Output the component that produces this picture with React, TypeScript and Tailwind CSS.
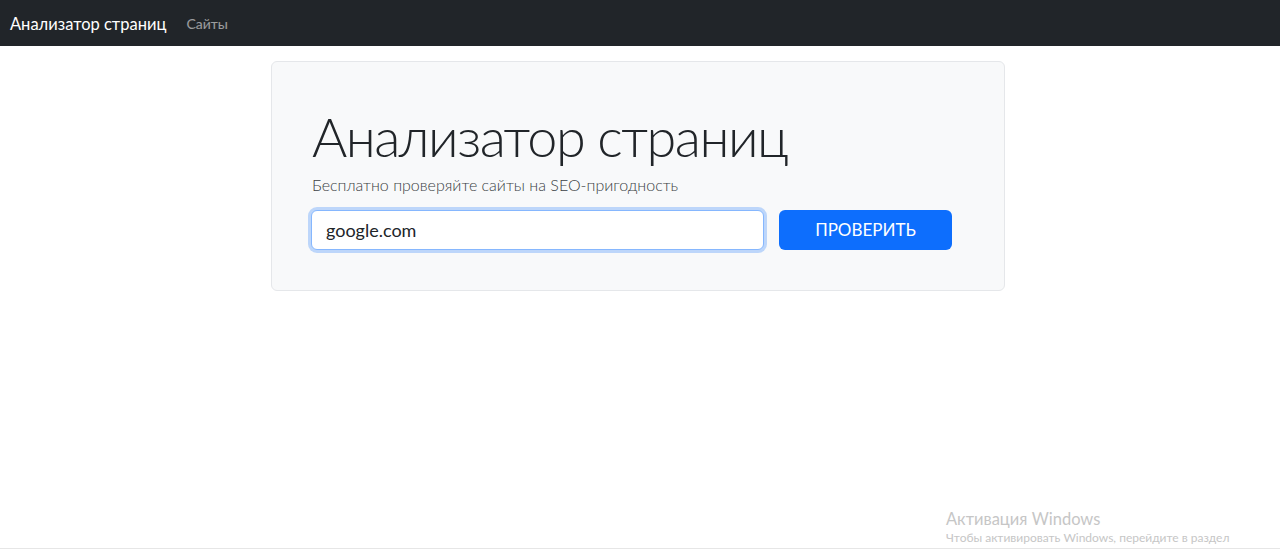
import { useState } from 'react'

export default function App() {
  const [url, setUrl] = useState('google.com')

  return (
    <div className="relative flex min-h-[551px] flex-col bg-white font-['Lato','Noto_Sans',sans-serif] text-[#212529]">
      <nav className="flex h-[46px] items-center bg-[#212529] px-[10px] pt-[2px]">
        <a href="#" className="text-[16.5px] leading-none text-white">Анализатор страниц</a>
        <a href="#" className="ml-[20px] text-[14px] leading-none text-white/55">Сайты</a>
      </nav>

      <main className="mt-[15px] flex justify-center pr-[4px]">
        <div className="w-[734px] rounded-[6px] border border-[#e5e7ea] bg-[#f8f9fa] pt-[43px] pr-[40px] pb-[40px] pl-[39px]">
          <h1 className="pl-[1px] text-[54px] leading-[1.2] font-light tracking-[-1.5px]">Анализатор страниц</h1>
          <p className="mt-[5px] pl-[1px] text-[16px] leading-[1.3] font-light text-[#3a3f44]">
            Бесплатно проверяйте сайты на SEO-пригодность
          </p>
          <form className="mt-[14px] flex gap-[15px]" onSubmit={(e) => e.preventDefault()}>
            <input
              value={url}
              onChange={(e) => setUrl(e.target.value)}
              className="h-[40px] w-[453px] rounded-[6px] border border-[#86b7fe] bg-white px-[14px] text-[18px] text-[#212529] shadow-[0_0_0_3px_rgba(13,110,253,0.25)] outline-none"
            />
            <button
              type="submit"
              className="h-[40px] w-[173px] rounded-[6px] bg-[#0d6efd] text-[17px] text-white uppercase hover:bg-[#0b5ed7]"
            >
              Проверить
            </button>
          </form>
        </div>
      </main>

      <div className="flex-1" />
      <div className="mb-[2px] border-t border-[#e6e6e6]" />

      <div className="pointer-events-none absolute top-[509px] left-[946px] text-[#c6c6c6]">
        <div className="text-[16.5px] leading-[20px]">Активация Windows</div>
        <div className="mt-[1px] text-[12px] leading-[16px] whitespace-nowrap">Чтобы активировать Windows, перейдите в раздел</div>
      </div>
    </div>
  )
}
